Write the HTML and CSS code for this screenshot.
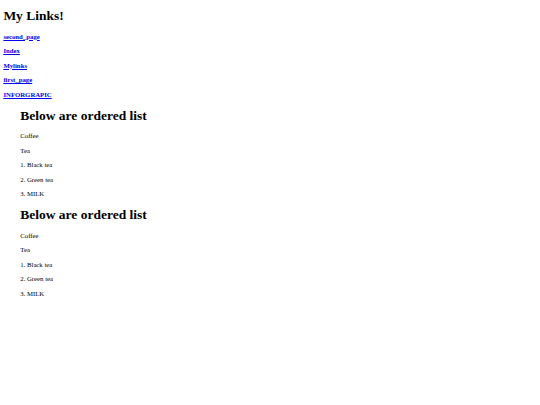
FILE: index.html
```html
<!DOCTYPE html>
<html>
<head>
<meta charset="utf-8">
<title>My Links</title>
<link rel="stylesheet" href="styles.css">
</head>
<body class="page">
<h1 class="title title-top">My Links!</h1>
<p class="nav-item"><a class="nav-link" href="#">second_page</a></p>
<p class="nav-item"><a class="nav-link" href="#">Index</a></p>
<p class="nav-item"><a class="nav-link" href="#">Mylinks</a></p>
<p class="nav-item"><a class="nav-link" href="#">first_page</a></p>
<p class="nav-item"><a class="nav-link" href="#">INFORGRAPIC</a></p>
<blockquote class="section">
<h1 class="title">Below are ordered list</h1>
<p class="item">Coffee</p>
<p class="item">Tea</p>
<p class="item">1. Black tea</p>
<p class="item">2. Green tea</p>
<p class="item">3. MILK</p>
</blockquote>
<blockquote class="section">
<h1 class="title">Below are ordered list</h1>
<p class="item">Coffee</p>
<p class="item">Tea</p>
<p class="item">1. Black tea</p>
<p class="item">2. Green tea</p>
<p class="item">3. MILK</p>
</blockquote>
</body>
</html>
```
FILE: styles.css
```css
html {
  background: #fff;
}
.page {
  margin: 3.375px;
  font-family: "Liberation Serif", "Times New Roman", serif;
  font-size: 6.75px;
  line-height: 1.15;
  color: #000;
}
.title {
  font-size: 2em;
  font-weight: bold;
  margin: 0.67em 0;
}
.title-top {
  margin-top: 5px;
}
.nav-item {
  margin: 1em 0;
  font-weight: bold;
}
.nav-link {
  color: #0000ee;
  text-decoration: underline;
}
.section {
  margin: 1em 16.875px;
}
.item {
  margin: 1em 0;
}
```
